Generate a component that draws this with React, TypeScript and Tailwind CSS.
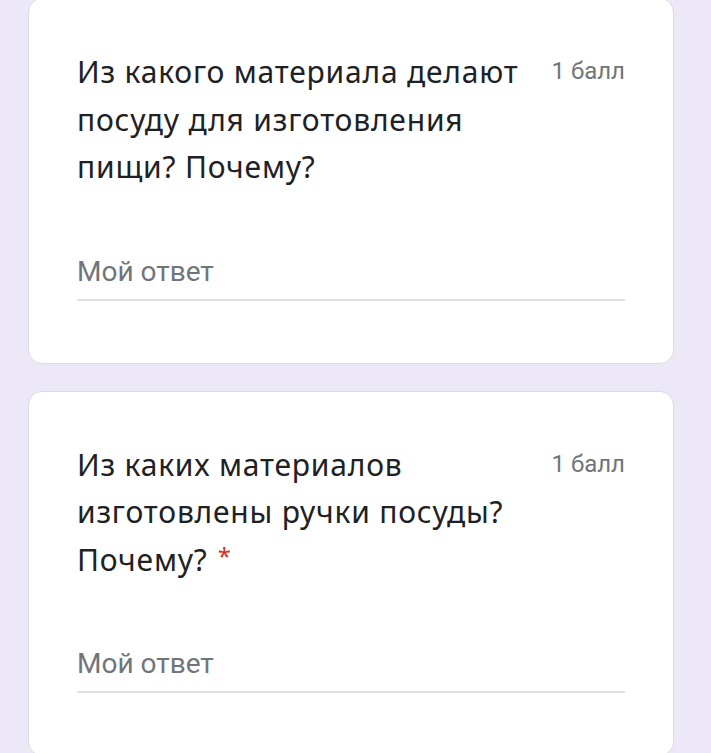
export default function App() {
  const Card = ({ q, required, className }: { q: string; required?: boolean; className?: string }) => (
    <div className={"bg-white border border-[#dadce0] rounded-[14px] px-[48px] pt-[49px] pb-[62px] " + (className ?? "")}>
      <div className="flex items-start justify-between">
        <div className="w-[460px] text-[30px] leading-[47.5px] tracking-[0.8px] text-[#202124]" style={{ fontFamily: '"Noto Sans", sans-serif' }}>
          {q}
          {required && <span className="text-[#d93025] text-[24px] leading-[0] ml-[10px] align-[6px]">*</span>}
        </div>
        <div className="text-[24px] leading-[47.5px] text-[#70757a]" style={{ fontFamily: 'Roboto, sans-serif' }}>1 балл</div>
      </div>
      <div className="mt-[64px] text-[28px] leading-[34px] text-[#70757a] pb-[10px] border-b-2 border-[#e0e0e0]" style={{ fontFamily: 'Roboto, sans-serif' }}>
        Мой ответ
      </div>
    </div>
  );
  return (
    <div className="w-[711px] h-[753px] overflow-hidden bg-[#ece8f7]">
      <div className="px-[28px] pr-[37px] -mt-[2px] flex flex-col gap-[27px]">
        <Card q="Из какого материала делают посуду для изготовления пищи? Почему?" />
        <Card q="Из каких материалов изготовлены ручки посуды? Почему?" required />
      </div>
    </div>
  );
}
